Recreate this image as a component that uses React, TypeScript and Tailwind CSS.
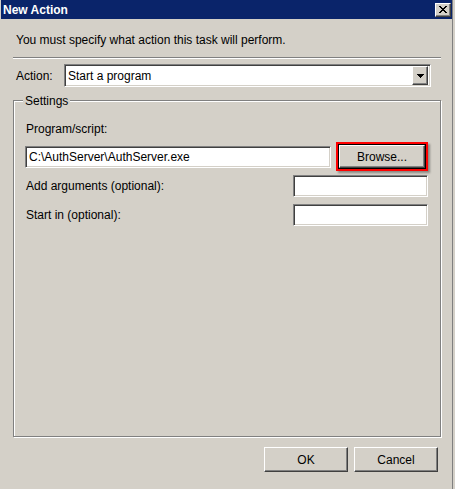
import React from "react";

const sunken =
  "border border-t-[#808080] border-l-[#808080] border-b-white border-r-white shadow-[inset_1px_1px_0_#404040,inset_-1px_-1px_0_#d4d0c8] bg-white";
const raised =
  "border border-t-white border-l-white border-b-[#404040] border-r-[#404040] shadow-[inset_-1px_-1px_0_#808080] bg-[#d4d0c8]";

function TextBox({ className, value }: { className: string; value?: string }) {
  return (
    <div className={`${sunken} ${className} flex items-center pl-[3px] text-[12px] text-black`}>
      {value}
    </div>
  );
}

function Button({ label, className }: { label: string; className: string }) {
  return (
    <div className={`${raised} ${className} flex items-center justify-center text-[12px] text-black`}>
      {label}
    </div>
  );
}

export default function App() {
  return (
    <div
      className="w-[455px] h-[489px] bg-[#d4d0c8] overflow-hidden flex text-black"
      style={{ fontFamily: '"Liberation Sans", Arial, sans-serif' }}
    >
      <div className="w-[452px] h-full flex flex-col">
        {/* Title bar */}
        <div className="h-[19px] ml-[1px] bg-[#0a246a] flex items-center justify-between pl-[2px] pr-[1px]">
          <span className="text-white font-bold text-[12px] leading-[14px]">New Action</span>
          <div className={`${raised} w-[16px] h-[14px] flex items-center justify-center`}>
            <svg width="8" height="7" viewBox="0 0 8 7" shapeRendering="crispEdges">
              <path
                d="M0 0h2v1h-2zM6 0h2v1h-2zM1 1h2v1h-2zM5 1h2v1h-2zM2 2h4v1h-4zM3 3h2v1h-2zM2 4h4v1h-4zM1 5h2v1h-2zM5 5h2v1h-2zM0 6h2v1h-2zM6 6h2v1h-2z"
                fill="#000"
              />
            </svg>
          </div>
        </div>

        {/* Body */}
        <div className="flex flex-col pl-[13px]">
          <div className="mt-[14px] ml-[3px] text-[12px] leading-[14px]">
            You must specify what action this task will perform.
          </div>

          <div className="mt-[10px] w-[428px] h-[2px] border-t border-t-[#808080] border-b border-b-white" />

          {/* Action row */}
          <div className="mt-[5px] flex items-center h-[23px]">
            <span className="ml-[3px] text-[12px] leading-[14px] w-[48px]">Action:</span>
            <div className={`${sunken} w-[367px] h-[23px] flex items-center justify-between pr-[2px]`}>
              <span className="pl-[3px] text-[12px]">Start a program</span>
              <div className={`${raised} w-[16px] h-[19px] flex items-center justify-center`}>
                <svg width="7" height="4" viewBox="0 0 7 4" shapeRendering="crispEdges">
                  <path d="M0 0h7v1h-7zM1 1h5v1h-5zM2 2h3v1h-3zM3 3h1v1h-1z" fill="#000" />
                </svg>
              </div>
            </div>
          </div>

          {/* Settings group */}
          <div className="mt-[13px] w-[428px] h-[337px] border border-[#808080] shadow-[inset_1px_1px_0_#fff,1px_1px_0_#fff] flex flex-col">
            <div className="-mt-[7px] ml-[9px] px-[2px] bg-[#d4d0c8] w-fit text-[12px] leading-[14px]">Settings</div>

            <div className="flex flex-col pl-[11px] w-[414px]">
              <div className="mt-[14px] ml-[1px] text-[12px] leading-[14px]">Program/script:</div>

              <div className="mt-[6px] h-[29px] flex items-center justify-between">
                <TextBox className="w-[306px] h-[22px]" value="C:\AuthServer\AuthServer.exe" />
                <div className="w-[92px] h-[29px] border-2 border-[#ff0000] shadow-[2px_2px_2px_rgba(0,0,0,0.35)] flex">
                  <div className="flex-1 border border-black flex">
                    <Button label="Browse..." className="flex-1" />
                  </div>
                </div>
              </div>

              <div className="mt-[4px] h-[22px] flex items-center justify-between">
                <span className="ml-[1px] text-[12px] leading-[14px]">Add arguments (optional):</span>
                <TextBox className="w-[135px] h-[22px]" />
              </div>

              <div className="mt-[7px] h-[22px] flex items-center justify-between">
                <span className="ml-[1px] text-[12px] leading-[14px]">Start in (optional):</span>
                <TextBox className="w-[135px] h-[22px]" />
              </div>
            </div>
          </div>

          {/* Bottom buttons */}
          <div className="mt-[10px] w-[425px] flex justify-end gap-[6px]">
            <Button label="OK" className="w-[84px] h-[25px]" />
            <Button label="Cancel" className="w-[84px] h-[25px]" />
          </div>
        </div>
      </div>
      {/* Right window frame */}
      <div className="w-[3px] h-full flex">
        <div className="w-[1px] h-full bg-[#808080]" />
        <div className="w-[2px] h-full bg-[#d4d0c8]" />
      </div>
    </div>
  );
}
